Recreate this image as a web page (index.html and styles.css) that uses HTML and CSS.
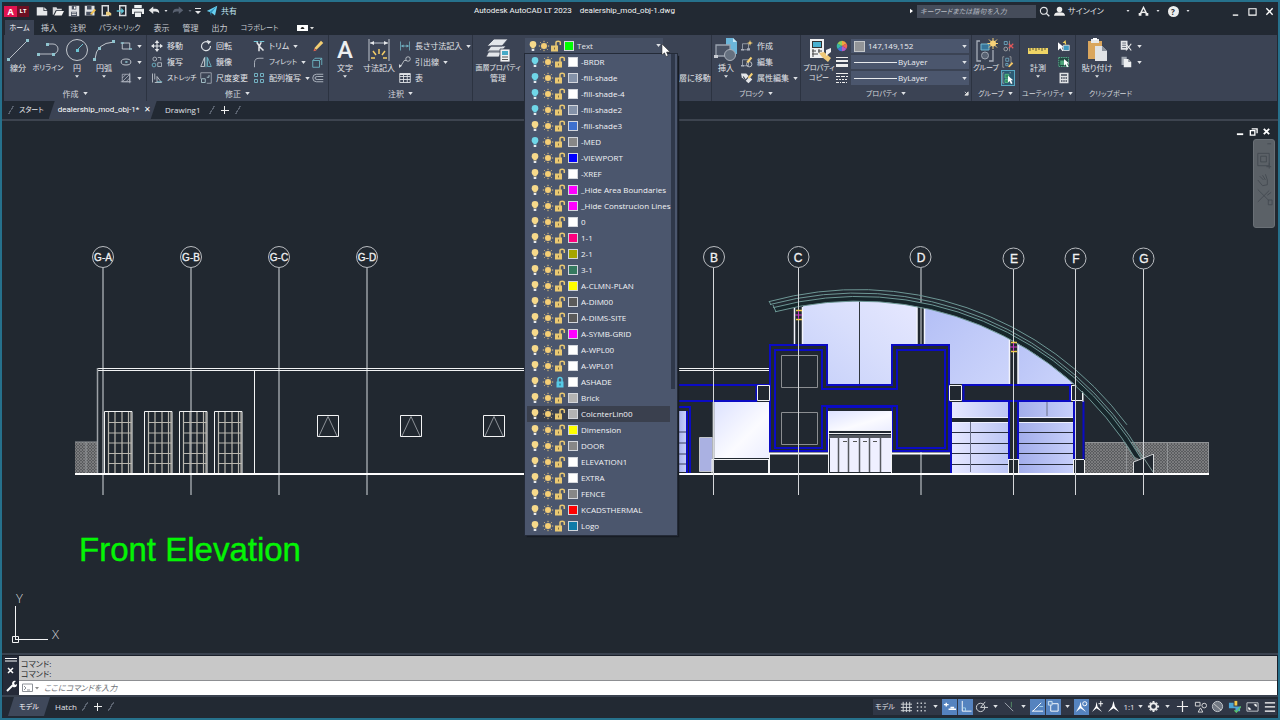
FILE: index.html
```html
<!DOCTYPE html>
<html lang="ja">
<head>
<meta charset="utf-8">
<title>Autodesk AutoCAD LT 2023 - dealership_mod_obj-1.dwg</title>
<link rel="stylesheet" href="styles.css">
</head>
<body>
<svg class="defs" aria-hidden="true">
  <symbol id="bulb" viewBox="0 0 10 12"><circle cx="5" cy="4.3" r="3.3" fill="currentColor"/><path d="M3.4 6h3.2v2.4H3.4z" fill="currentColor"/><path d="M3.7 9h2.6v2H3.7z" fill="#e8eaee"/></symbol>
  <symbol id="sun" viewBox="0 0 12 12"><circle cx="6" cy="6" r="3" fill="#f5ce76"/><path d="M6 .8v1.4M6 9.8v1.4M.8 6h1.4M9.800 6h1.4M2.300 2.300l1 1M8.700 8.700l1 1M9.700 2.300l-1 1M2.300 9.700l1-1" stroke="#e9c77e" stroke-width="1"/></symbol>
  <symbol id="unlock" viewBox="0 0 12 12"><path d="M1 5.500h7v6H1z" fill="#e9c872"/><path d="M6 6V2.500Q6 1.200 8.200 1.200T10.300 2.500V5" fill="none" stroke="#e9c872" stroke-width="1.500"/><path d="M4 7.500h1v2H4z" fill="#7c6c45"/></symbol>
  <symbol id="lock" viewBox="0 0 12 12"><path d="M2.500 5.500h7v6h-7z" fill="#57cbe8"/><path d="M4 6V3.500Q4 1.500 6 1.500T8 3.500V6" fill="none" stroke="#57cbe8" stroke-width="1.500"/><path d="M5.500 7.500h1v2h-1z" fill="#24566b"/></symbol>
  <symbol id="dn" viewBox="0 0 6 4"><path d="M0 0h6L3 4z" fill="currentColor"/></symbol>
</svg>
<div class="app">
  <header class="titlebar">
    <div class="logo"><b>A</b><span>LT</span></div>
    <div class="quick">
      <button aria-label="新規"><svg viewBox="0 0 16 16"><path d="M1 3h9v5h5v6H1z" fill="#e6e8ea"/><path d="M11 3l4 4h-4z" fill="#e6e8ea"/></svg></button>
      <button aria-label="開く"><svg viewBox="0 0 16 16"><path d="M1 3h5l1 2h6v2H5l-3 6H1z" fill="#d5d7da"/><path d="M6 8h10l-3 6H3z" fill="#f1f1f1"/></svg></button>
      <button aria-label="保存"><svg viewBox="0 0 16 16"><path d="M1 1h14v14H1z" fill="#dfe1e4"/><path d="M5 1h6v5H5zM4 9h8v6H4z" fill="#485060"/><path d="M8 2h2v3H8zM5 10h6v1H5zM5 12h6v1H5z" fill="#fff"/></svg></button>
      <button aria-label="名前を付けて保存"><svg viewBox="0 0 16 16"><path d="M1 1h13v13H1z" fill="#dfe1e4"/><path d="M4 1h6v5H4zM3 9h8v5H3z" fill="#485060"/><path d="M8 12l6-7 2 2-6 6z" fill="#f3c451"/></svg></button>
      <button aria-label="Webから開く"><svg viewBox="0 0 16 16"><path d="M3 1h8v13H3z" fill="none" stroke="#d8dadd" stroke-width="2"/><path d="M8 9h4l3 2v3H8z" fill="#e9cc80"/></svg></button>
      <button aria-label="Webへ保存"><svg viewBox="0 0 16 16"><path d="M5 1h8v13H5z" fill="none" stroke="#d8dadd" stroke-width="2"/><path d="M1 7h6V4l4 4-4 4V9H1z" fill="#62c5d6"/></svg></button>
      <button aria-label="印刷"><svg viewBox="0 0 16 16"><path d="M3 0h10v4H3zM0 5h16v7h-3V9H3v3H0zM4 10h8v6H4z" fill="#edf0f2"/></svg></button>
      <button aria-label="元に戻す"><svg viewBox="0 0 16 16"><path d="M1 7l6-5v3h3q5 0 5 6-2-2.500-5-2.500H7V12z" fill="#e4e6e8"/></svg></button>
      <button class="narrow" aria-label="履歴"><svg class="dn"><use href="#dn"/></svg></button>
      <button class="dim" aria-label="やり直し"><svg viewBox="0 0 16 16"><path d="M15 7L9 2v3H6q-5 0-5 6 2-2.500 5-2.500h3V12z" fill="#596170"/></svg></button>
      <button class="narrow dim" aria-label="やり直し履歴"><svg class="dn"><use href="#dn"/></svg></button>
      <button class="narrow" aria-label="カスタマイズ"><svg viewBox="0 0 8 8" class="cust"><path d="M1 1h6v1H1zM1 4h6L4 7z" fill="#e5e6e8"/></svg></button>
      <button class="share"><svg viewBox="0 0 16 16"><path d="M1 8l14-7-3 13-5-4z" fill="#69cff0"/><path d="M5 9l9-7-7 9v4z" fill="#2f91bb"/></svg>共有</button>
    </div>
    <h1><span>Autodesk AutoCAD LT 2023</span><span>dealership_mod_obj-1.dwg</span></h1>
    <div class="account">
      <svg viewBox="0 0 4 6" class="play"><path d="M0 0l4 3-4 3z" fill="#fff"/></svg>
      <input type="text" aria-label="検索" placeholder="キーワードまたは語句を入力">
      <button aria-label="検索"><svg viewBox="0 0 16 16"><circle cx="7" cy="7" r="5" fill="none" stroke="#e4e6e9" stroke-width="1.600"/><path d="M10 10l5 5" stroke="#e4e6e9" stroke-width="2"/></svg></button>
      <button class="sign"><svg viewBox="0 0 16 16"><circle cx="8" cy="5" r="4" fill="#eee"/><path d="M0 14q0-5 8-5t8 5z" fill="#eee"/></svg>サインイン</button>
      <button class="narrow" aria-label="アカウント"><svg class="dn"><use href="#dn"/></svg></button>
      <button aria-label="アプリ"><svg viewBox="0 0 16 16"><path d="M8 2L4 10l4-1 4 1z" fill="none" stroke="#eee" stroke-width="2"/><path d="M1 10h4v4H1zM11 10h4v4h-4z" fill="#eee"/></svg></button>
      <button class="narrow" aria-label="アプリメニュー"><svg class="dn"><use href="#dn"/></svg></button>
      <button class="help" aria-label="ヘルプ"><b>?</b></button>
      <button class="narrow" aria-label="ヘルプメニュー"><svg class="dn"><use href="#dn"/></svg></button>
    </div>
    <div class="winctl">
      <button aria-label="最小化"><svg viewBox="0 0 10 10"><path d="M2 9h6" stroke="#fff" stroke-width="1.500"/></svg></button>
      <button aria-label="最大化"><svg viewBox="0 0 10 10"><path d="M1 2h8v7H1z" fill="none" stroke="#fff" stroke-width="1.200"/></svg></button>
      <button aria-label="閉じる"><svg viewBox="0 0 10 10"><path d="M1.500 1.500l7 7M8.500 1.500l-7 7" stroke="#fff" stroke-width="1.500"/></svg></button>
    </div>
  </header>

  <nav class="menu">
    <button class="on kana">ホーム</button><button>挿入</button><button>注釈</button><button class="kana">パラメトリック</button><button>表示</button><button>管理</button><button>出力</button><button class="kana">コラボレート</button>
    <button class="fold" aria-label="リボンを最小化"><svg viewBox="0 0 18 6"><path d="M0 0h11v6H0z" fill="#fff"/><path d="M4 3.500h3L5.500 2z" fill="#222" stroke="#222"/><path d="M13 2h4l-2 2.500z" fill="#ddd"/></svg></button>
  </nav>

  <section class="ribbon">
    <div class="panel p-draw">
      <div class="body">
        <button class="big w28"><svg viewBox="0 0 24 24"><path d="M3 21L21 3" stroke="#b9bec6"/><path d="M1 20h3v3H1zM20 1h3v3h-3z" fill="#8fc4cf"/></svg>線分</button>
        <button class="big w32 kana"><svg viewBox="0 0 24 24"><path d="M3 16h14a5 5 0 0 0 0-10h-4" fill="none" stroke="#b9bec6"/><path d="M1 15h3v3H1zM16 15h3v3h-3zM10 5h3v3h-3z" fill="#8fc4cf"/></svg>ポリライン</button>
        <button class="big w26"><svg viewBox="0 0 24 24"><circle cx="12" cy="12" r="10.500" fill="none" stroke="#c3c8ce"/><path d="M12 12l6-6" stroke="#6cc3d2"/><path d="M11 11h3v3h-3z" fill="#6cc3d2"/></svg>円<svg class="dn"><use href="#dn"/></svg></button>
        <button class="big w28"><svg viewBox="0 0 24 24"><path d="M3 21Q4 5 22 4" fill="none" stroke="#c3c8ce"/><path d="M1 20h3v3H1zM6 9h3v3H6zM20 2h3v3h-3z" fill="#8fc4cf"/></svg>円弧<svg class="dn"><use href="#dn"/></svg></button>
        <div class="rows">
          <button class="sm"><svg viewBox="0 0 16 16"><path d="M3 4h10v8H3z" fill="none" stroke="#c0c5cd" stroke-width="1.300"/><path d="M1 3h4v2H1zM12 11h4v2h-4z" fill="#8fc4cf"/></svg><svg class="dn"><use href="#dn"/></svg></button>
          <button class="sm"><svg viewBox="0 0 16 16"><ellipse cx="8" cy="8" rx="6.500" ry="4" fill="none" stroke="#c0c5cd" stroke-width="1.300"/><path d="M7 7h3v2H7z" fill="#8fc4cf"/></svg><svg class="dn"><use href="#dn"/></svg></button>
          <button class="sm"><svg viewBox="0 0 16 16"><path d="M3 3h10v10H3zM3 8l5-5M3 13L13 3M8 13l5-5" fill="none" stroke="#b4bac4"/><path d="M1 13h14M13 1v14" stroke="#b4bac4"/></svg><svg class="dn"><use href="#dn"/></svg></button>
        </div>
      </div>
      <button class="title">作成<svg class="dn"><use href="#dn"/></svg></button>
    </div>

    <div class="panel p-mod">
      <div class="body grid4">
        <button class="sm"><svg viewBox="0 0 16 16"><path d="M8 2v12M2 8h12" stroke="#e4e7ea" stroke-width="1.500"/><path d="M8 0l3 4H5zM8 16l3-4H5zM0 8l4-3v6zM16 8l-4-3v6z" fill="#e4e7ea"/></svg>移動</button>
        <button class="sm"><svg viewBox="0 0 16 16"><path d="M11 3A6 6 0 1 0 14 8" fill="none" stroke="#dfe3e7" stroke-width="1.500"/><path d="M9 0l6 2-4 4z" fill="#dfe3e7"/></svg>回転</button>
        <button class="sm"><svg viewBox="0 0 16 16"><path d="M1 2h6M9 2h6" stroke="#74c7d7" stroke-width="1.500"/><path d="M5 3l4 6 5 5M11 3L8 9v6" stroke="#e6e8ea" stroke-width="2" fill="none"/></svg>トリム<svg class="dn"><use href="#dn"/></svg></button>
        <button class="sm"><svg viewBox="0 0 16 16"><path d="M3 11l9-10 3 3-9 9z" fill="#f3ce73"/><path d="M3 11l3 3-4 1z" fill="#e6664f"/></svg></button>
        <button class="sm"><svg viewBox="0 0 16 16"><circle cx="5" cy="4" r="2.500" fill="none" stroke="#c6cbd2"/><path d="M9 2h4v4" fill="none" stroke="#c6cbd2"/><circle cx="4" cy="12" r="2.500" fill="none" stroke="#74c7d7"/><path d="M9 9h5v5H9z" fill="none" stroke="#c6cbd2"/></svg>複写</button>
        <button class="sm"><svg viewBox="0 0 16 16"><path d="M6 2v12H1z" fill="none" stroke="#dfe3e7"/><path d="M10 2v12h5z" fill="none" stroke="#74c7d7"/><path d="M8 1v14" stroke="#74c7d7"/></svg>鏡像</button>
        <button class="sm kana"><svg viewBox="0 0 16 16"><path d="M2 15V9q0-6 6-6h6" fill="none" stroke="#a9afb9" stroke-width="1.300"/></svg>フィレット<svg class="dn"><use href="#dn"/></svg></button>
        <button class="sm"><svg viewBox="0 0 16 16"><path d="M1 6h9v9H1zM4 3h9v9M10 6l3-3M1 6l3-3" fill="none" stroke="#6cb3c2" stroke-width="1.200"/></svg></button>
        <button class="sm kana"><svg viewBox="0 0 16 16"><path d="M2 2v12M5 14h9L8 6v8M5 2v8" fill="none" stroke="#bcc2ca" stroke-width="1.200"/><path d="M8 13h7" stroke="#74c7d7"/></svg>ストレッチ</button>
        <button class="sm"><svg viewBox="0 0 16 16"><path d="M1 9V1h14v14H9" fill="none" stroke="#9fa6b1" stroke-width="1.200"/><path d="M2 9h5v5H2zM9 7h3V4" fill="none" stroke="#bfe0e6"/></svg>尺度変更</button>
        <button class="sm"><svg viewBox="0 0 16 16"><path d="M2 2h4v4H2zM10 2h4v4h-4zM2 10h4v4H2zM10 10h4v4h-4z" fill="none" stroke="#74b3c4" stroke-width="1.300"/></svg>配列複写<svg class="dn"><use href="#dn"/></svg></button>
        <button class="sm"><svg viewBox="0 0 16 16"><path d="M15 3H6Q1 3 1 8t5 5h9M15 6H7Q4 6 4 8t3 2h8" fill="none" stroke="#b6bdc7" stroke-width="1.200"/></svg></button>
      </div>
      <button class="title">修正<svg class="dn"><use href="#dn"/></svg></button>
    </div>

    <div class="panel p-ann">
      <div class="body">
        <button class="big w32"><span class="bigA">A</span>文字<svg class="dn"><use href="#dn"/></svg></button>
        <button class="big w36"><svg viewBox="0 0 24 24"><path d="M2 1v22M22 1v22M3 5h18" stroke="#c0c6ce" fill="none"/><path d="M3 5l4-2v4zM21 5l-4-2v4z" fill="#e5e7ea"/><path d="M12 11v5M6 13l3 4M18 13l-3 4M4 20h4M20 20h-4" stroke="#f3cd67" stroke-width="1.500"/></svg>寸法記入</button>
        <div class="rows">
          <button class="sm"><svg viewBox="0 0 16 16"><path d="M2 2v12M14 2v12M3 8h10" stroke="#74b7c8"/><path d="M3 8l3-2v4zM13 8l-3-2v4z" fill="#74b7c8"/></svg>長さ寸法記入<svg class="dn"><use href="#dn"/></svg></button>
          <button class="sm"><svg viewBox="0 0 16 16"><circle cx="12" cy="4" r="3" fill="none" stroke="#d5d9de"/><path d="M10 6H7l-5 8" fill="none" stroke="#d5d9de"/><path d="M0 11l4 2-4 3z" fill="#d5d9de"/></svg>引出線<svg class="dn"><use href="#dn"/></svg></button>
          <button class="sm"><svg viewBox="0 0 16 16"><path d="M1 2h14v12H1zM1 6h14M1 10h14M6 4v10M11 4v10" fill="none" stroke="#dfe2e6" stroke-width="1.200"/><path d="M1 2h14v2H1z" fill="#dfe2e6"/></svg>表</button>
        </div>
      </div>
      <button class="title">注釈<svg class="dn"><use href="#dn"/></svg></button>
    </div>

    <div class="panel p-layer">
      <div class="body">
        <button class="big w50"><svg viewBox="0 0 24 24"><path d="M8 1h14l-6 7H1zM5 8h15l-5 6H1zM3 13h13l-3 6H0z" fill="#e3e6ea" stroke="#3b4354" stroke-width=".8"/><path d="M14 11h10v13H14z" fill="#f0f1f2" stroke="#3b4354" stroke-width=".8"/><path d="M16 13h6v4h-6z" fill="#46aac7"/><path d="M16 19h6M16 21.500h6" stroke="#555"/></svg><span class="kana">画層プロパティ</span>管理</button>
        <div class="layers">
          <button class="combo" aria-expanded="true" aria-label="画層"><svg class="bu on"><use href="#bulb"/></svg><svg class="ic"><use href="#sun"/></svg><svg class="ic"><use href="#unlock"/></svg><i class="green"></i><span>Text</span><svg class="dn"><use href="#dn"/></svg></button>
          <ul class="list" role="listbox" aria-label="画層一覧">
            <li role="option"><svg class="bu"><use href="#bulb"/></svg><svg class="ic"><use href="#sun"/></svg><svg class="ic"><use href="#unlock"/></svg><i class="white"></i>-BRDR</li>
            <li role="option"><svg class="bu"><use href="#bulb"/></svg><svg class="ic"><use href="#sun"/></svg><svg class="ic"><use href="#unlock"/></svg><i class="slate"></i>-fill-shade</li>
            <li role="option"><svg class="bu"><use href="#bulb"/></svg><svg class="ic"><use href="#sun"/></svg><svg class="ic"><use href="#unlock"/></svg><i class="white"></i>-fill-shade-4</li>
            <li role="option"><svg class="bu"><use href="#bulb"/></svg><svg class="ic"><use href="#sun"/></svg><svg class="ic"><use href="#unlock"/></svg><i class="slate"></i>-fill-shade2</li>
            <li role="option"><svg class="bu on"><use href="#bulb"/></svg><svg class="ic"><use href="#sun"/></svg><svg class="ic"><use href="#unlock"/></svg><i class="azure"></i>-fill-shade3</li>
            <li role="option"><svg class="bu"><use href="#bulb"/></svg><svg class="ic"><use href="#sun"/></svg><svg class="ic"><use href="#unlock"/></svg><i class="gray"></i>-MED</li>
            <li role="option"><svg class="bu on"><use href="#bulb"/></svg><svg class="ic"><use href="#sun"/></svg><svg class="ic"><use href="#unlock"/></svg><i class="blue"></i>-VIEWPORT</li>
            <li role="option"><svg class="bu on"><use href="#bulb"/></svg><svg class="ic"><use href="#sun"/></svg><svg class="ic"><use href="#unlock"/></svg><i class="white"></i>-XREF</li>
            <li role="option"><svg class="bu on"><use href="#bulb"/></svg><svg class="ic"><use href="#sun"/></svg><svg class="ic"><use href="#unlock"/></svg><i class="magenta"></i>_Hide Area Boundaries</li>
            <li role="option"><svg class="bu on"><use href="#bulb"/></svg><svg class="ic"><use href="#sun"/></svg><svg class="ic"><use href="#unlock"/></svg><i class="magenta"></i>_Hide Construcion Lines</li>
            <li role="option"><svg class="bu on"><use href="#bulb"/></svg><svg class="ic"><use href="#sun"/></svg><svg class="ic"><use href="#unlock"/></svg><i class="white"></i>0</li>
            <li role="option"><svg class="bu on"><use href="#bulb"/></svg><svg class="ic"><use href="#sun"/></svg><svg class="ic"><use href="#unlock"/></svg><i class="rose"></i>1-1</li>
            <li role="option"><svg class="bu on"><use href="#bulb"/></svg><svg class="ic"><use href="#sun"/></svg><svg class="ic"><use href="#unlock"/></svg><i class="olive"></i>2-1</li>
            <li role="option"><svg class="bu on"><use href="#bulb"/></svg><svg class="ic"><use href="#sun"/></svg><svg class="ic"><use href="#unlock"/></svg><i class="teal"></i>3-1</li>
            <li role="option"><svg class="bu on"><use href="#bulb"/></svg><svg class="ic"><use href="#sun"/></svg><svg class="ic"><use href="#unlock"/></svg><i class="yellow"></i>A-CLMN-PLAN</li>
            <li role="option"><svg class="bu on"><use href="#bulb"/></svg><svg class="ic"><use href="#sun"/></svg><svg class="ic"><use href="#unlock"/></svg><i class="coal"></i>A-DIM00</li>
            <li role="option"><svg class="bu on"><use href="#bulb"/></svg><svg class="ic"><use href="#sun"/></svg><svg class="ic"><use href="#unlock"/></svg><i class="coal"></i>A-DIMS-SITE</li>
            <li role="option"><svg class="bu on"><use href="#bulb"/></svg><svg class="ic"><use href="#sun"/></svg><svg class="ic"><use href="#unlock"/></svg><i class="magenta"></i>A-SYMB-GRID</li>
            <li role="option"><svg class="bu on"><use href="#bulb"/></svg><svg class="ic"><use href="#sun"/></svg><svg class="ic"><use href="#unlock"/></svg><i class="white"></i>A-WPL00</li>
            <li role="option"><svg class="bu on"><use href="#bulb"/></svg><svg class="ic"><use href="#sun"/></svg><svg class="ic"><use href="#unlock"/></svg><i class="white"></i>A-WPL01</li>
            <li role="option"><svg class="bu on"><use href="#bulb"/></svg><svg class="ic"><use href="#sun"/></svg><svg class="ic"><use href="#lock"/></svg><i class="white"></i>ASHADE</li>
            <li role="option"><svg class="bu on"><use href="#bulb"/></svg><svg class="ic"><use href="#sun"/></svg><svg class="ic"><use href="#unlock"/></svg><i class="silver"></i>Brick</li>
            <li role="option" aria-selected="true"><svg class="bu on"><use href="#bulb"/></svg><svg class="ic"><use href="#sun"/></svg><svg class="ic"><use href="#unlock"/></svg><i class="silver"></i>ColcnterLin00</li>
            <li role="option"><svg class="bu on"><use href="#bulb"/></svg><svg class="ic"><use href="#sun"/></svg><svg class="ic"><use href="#unlock"/></svg><i class="yellow"></i>Dimension</li>
            <li role="option"><svg class="bu on"><use href="#bulb"/></svg><svg class="ic"><use href="#sun"/></svg><svg class="ic"><use href="#unlock"/></svg><i class="gray"></i>DOOR</li>
            <li role="option"><svg class="bu on"><use href="#bulb"/></svg><svg class="ic"><use href="#sun"/></svg><svg class="ic"><use href="#unlock"/></svg><i class="white"></i>ELEVATION1</li>
            <li role="option"><svg class="bu on"><use href="#bulb"/></svg><svg class="ic"><use href="#sun"/></svg><svg class="ic"><use href="#unlock"/></svg><i class="white"></i>EXTRA</li>
            <li role="option"><svg class="bu on"><use href="#bulb"/></svg><svg class="ic"><use href="#sun"/></svg><svg class="ic"><use href="#unlock"/></svg><i class="gray"></i>FENCE</li>
            <li role="option"><svg class="bu on"><use href="#bulb"/></svg><svg class="ic"><use href="#sun"/></svg><svg class="ic"><use href="#unlock"/></svg><i class="red"></i>KCADSTHERMAL</li>
            <li role="option"><svg class="bu on"><use href="#bulb"/></svg><svg class="ic"><use href="#sun"/></svg><svg class="ic"><use href="#unlock"/></svg><i class="cerulean"></i>Logo</li>
          </ul>
          <svg class="cursor" viewBox="0 0 10 15"><path d="M1 1v11l2.500-2.200L5 13.500l2-.8L5.500 9H9z" fill="#fff" stroke="#222" stroke-width=".5"/></svg>
        </div>
        <button class="move">層に移動</button>
      </div>
    </div>

    <div class="panel p-block">
      <div class="body">
        <button class="big w26"><svg viewBox="0 0 24 24"><path d="M12 0h7l4 4v12H12z" fill="#6bb6da"/><path d="M19 0v4h4z" fill="#c6e8f6"/><path d="M2 7h14v11H2z" fill="#4b5465" stroke="#9aa2ae" stroke-width="1.300"/><circle cx="16" cy="17" r="5.500" fill="#65707f" stroke="#aab1bb"/><path d="M0 17h4v3H0z" fill="#c8ccd2"/></svg>挿入<svg class="dn"><use href="#dn"/></svg></button>
        <div class="rows">
          <button class="sm"><svg viewBox="0 0 16 16"><path d="M2 5h8v8H2z" fill="none" stroke="#aab0bb"/><path d="M0 12h4v2H0zM8 11h4v3H8z" fill="#aab0bb"/><path d="M12 0l1 3 3 1-3 1-1 3-1-3-3-1 3-1z" fill="#f4cf74"/></svg>作成</button>
          <button class="sm"><svg viewBox="0 0 16 16"><path d="M2 5h8v8H2z" fill="none" stroke="#aab0bb"/><path d="M0 12h4v2H0z" fill="#aab0bb"/><circle cx="11" cy="11" r="3.500" fill="none" stroke="#e1e3e6"/><path d="M7 8l6-7 2 2-5 6z" fill="#f4cf74"/></svg>編集</button>
          <button class="sm"><svg viewBox="0 0 16 16"><path d="M0 2h7l8 8-5 5-9-8z" fill="#e3e5e8"/><path d="M3 6l3 5 8-9" fill="none" stroke="#3b4354" stroke-width="1.500"/><path d="M9 7l5-6 2 2-5 6z" fill="#f4cf74"/></svg>属性編集<svg class="dn"><use href="#dn"/></svg></button>
        </div>
      </div>
      <button class="title kana">ブロック<svg class="dn"><use href="#dn"/></svg></button>
    </div>

    <div class="panel p-prop">
      <div class="body">
        <button class="big w34 kana"><svg viewBox="0 0 24 24"><path d="M3 1h14v19H3z" fill="#f0f1f2"/><path d="M5 3h10v7H5z" fill="#333"/><path d="M6 4h8v5H6z" fill="#49b0d0"/><path d="M5 13h4M11 13h4M5 16h6M6 11v8M12 11v4" stroke="#444"/><path d="M12 15l5-1 7 6-3 4-6-5z" fill="#efc978"/><path d="M19 12l5-2v4l-5 4z" fill="#f2f2f2"/></svg>プロパティ<br>コピー</button>
        <div class="props">
          <span class="prop"><svg viewBox="0 0 16 16"><path d="M8 8V1a7 7 0 0 1 6 3.500z" fill="#f2a43d"/><path d="M8 8l6-3.500a7 7 0 0 1 0 7z" fill="#f06456"/><path d="M8 8l6 3.500A7 7 0 0 1 8 15z" fill="#b85bc4"/><path d="M8 8v7a7 7 0 0 1-6-3.500z" fill="#4278d8"/><path d="M8 8l-6 3.500a7 7 0 0 1 0-7z" fill="#39b7a6"/><path d="M8 8L2 4.500A7 7 0 0 1 8 1z" fill="#92ce58"/></svg><span class="field"><i class="rgb"></i><select aria-label="色"><option>147,149,152</option></select><svg class="dn"><use href="#dn"/></svg></span></span>
          <span class="prop"><svg viewBox="0 0 12 12"><path d="M0 1.500h12" stroke="#eee"/><path d="M0 5h12" stroke="#eee" stroke-width="2"/><path d="M0 9.500h12" stroke="#eee" stroke-width="3"/></svg><span class="field"><i class="rule"></i><select aria-label="線の太さ"><option>ByLayer</option></select><svg class="dn"><use href="#dn"/></svg></span></span>
          <span class="prop"><svg viewBox="0 0 12 12"><path d="M0 1.500h12" stroke="#eee"/><path d="M0 4.500h12" stroke="#eee" stroke-dasharray="4 1"/><path d="M0 7.500h12" stroke="#eee" stroke-dasharray="2 1"/><path d="M0 10.500h12" stroke="#eee" stroke-dasharray="3 1 1 1"/></svg><span class="field"><i class="rule"></i><select aria-label="線種"><option>ByLayer</option></select><svg class="dn"><use href="#dn"/></svg></span></span>
        </div>
      </div>
      <button class="title kana">プロパティ<svg class="dn"><use href="#dn"/></svg><svg class="launch" viewBox="0 0 6 6"><path d="M1 1l3 3M5 1v4H1z" fill="#ddd" stroke="#ddd"/></svg></button>
    </div>

    <div class="panel p-group">
      <div class="body">
        <button class="big w28 kana"><svg viewBox="0 0 24 24"><path d="M6 3H3v20h4M15 23h4V12" fill="none" stroke="#a7adb8" stroke-width="1.300"/><path d="M7 6h8v6H7z" fill="#37759a" stroke="#74b7d0"/><circle cx="11" cy="17.500" r="3.500" fill="#596373" stroke="#a0a7b2"/><circle cx="19" cy="5.500" r="3" fill="#f6d178"/><path d="M19 0v11M13.500 5.500h11M15 1.500l8 8M23 1.500l-8 8" stroke="#f6d178"/></svg>グループ</button>
        <div class="rows">
          <button class="sm"><svg viewBox="0 0 16 16"><path d="M3 2h4v4H3z" fill="none" stroke="#74b7d0"/><circle cx="5" cy="12" r="2.500" fill="none" stroke="#bbb"/><path d="M10 1v14" stroke="#999"/><path d="M9 5l6 6M15 5l-6 6" stroke="#e4585a" stroke-width="1.600"/></svg></button>
          <button class="sm"><svg viewBox="0 0 16 16"><path d="M3 1H1v14h2M10 1h2v8" fill="none" stroke="#aaa"/><path d="M5 3h4v4H5zM5 10h3v3H5z" fill="none" stroke="#74b7d0"/><path d="M8 14l5-6 2 2-5 5z" fill="#f3c767"/></svg></button>
          <button class="sm active"><svg viewBox="0 0 16 16"><path d="M3 1H1v14h2M10 1h2" fill="none" stroke="#aaa"/><path d="M4 3h5v5H4zM4 10h4v4H4z" fill="#308b62" stroke="#5cc38c"/><path d="M8 5v9l2-2 2 4 2-1-2-4h3z" fill="#fff"/></svg></button>
        </div>
      </div>
      <button class="title kana">グループ<svg class="dn"><use href="#dn"/></svg></button>
    </div>

    <div class="panel p-util">
      <div class="body">
        <button class="big w36"><svg viewBox="0 0 24 24"><path d="M2 10h20v6H2z" fill="#f0d565"/><path d="M4 10v3M7 10v2M10 10v3M13 10v2M16 10v3M19 10v2" stroke="#5d5939"/></svg>計測<svg class="dn"><use href="#dn"/></svg></button>
        <div class="rows">
          <button class="sm"><svg viewBox="0 0 16 16"><path d="M0 3v11l3-3 3 4 1-1-2-4h3z" fill="#fff"/><path d="M7 7h8v7H7z" fill="#3f9ac1" stroke="#eee"/><path d="M10 0L6 4h3v2h2z" fill="#f3d45e"/></svg></button>
          <button class="sm"><svg viewBox="0 0 16 16"><path d="M1 2h13v12H1z" fill="#214b42" stroke="#5fc596" stroke-dasharray="2 1"/><path d="M3 6h5v6H3z" fill="#4da47a"/><path d="M8 4v9l2-2 2 4 2-1-2-4h3z" fill="#fff"/></svg></button>
          <button class="sm"><svg viewBox="0 0 16 16"><path d="M2 1h12v14H2z" fill="#e1e3e5"/><path d="M4 3h8v2H4zM4 7h2v2H4zM7 7h2v2H7zM10 7h2v2h-2zM4 11h2v2H4zM7 11h2v2H7zM10 11h2v2h-2z" fill="#404857"/></svg></button>
        </div>
      </div>
      <button class="title kana">ユーティリティ<svg class="dn"><use href="#dn"/></svg></button>
    </div>

    <div class="panel p-clip">
      <div class="body">
        <button class="big w42"><svg viewBox="0 0 24 24"><path d="M3 3h14v18H3z" fill="#daa65e"/><path d="M6 1h8v4H6z" fill="#e7e8ea"/><path d="M8 0h4v2H8z" fill="#fff"/><path d="M10 8h7l5 5v10H10z" fill="#e1e3e6"/><path d="M17 8v5h5z" fill="#8c929c"/></svg>貼り付け<svg class="dn"><use href="#dn"/></svg></button>
        <div class="rows">
          <button class="sm"><svg viewBox="0 0 16 16"><path d="M1 1h9v12H1z" fill="#e4e6e9"/><path d="M3 4h5M3 7h5M3 10h5" stroke="#444c5b"/><path d="M8 5l7 9M15 5l-7 9" stroke="#eee" stroke-width="1.500"/></svg><svg class="dn"><use href="#dn"/></svg></button>
          <button class="sm"><svg viewBox="0 0 16 16"><path d="M2 1h7v11H2z" fill="#9fa6b0"/><path d="M5 4h6l4 4v7H5z" fill="#eceef0"/><path d="M11 4v4h4z" fill="#878d96"/></svg><svg class="dn"><use href="#dn"/></svg></button>
        </div>
      </div>
      <div class="title kana">クリップボード</div>
    </div>
  </section>

  <nav class="files">
    <span class="slash"></span><button class="kana">スタート</button>
    <div class="tab"><span>dealership_mod_obj-1*</span><button aria-label="タブを閉じる">✕</button></div>
    <button class="second">Drawing1</button><span class="slash"></span><button class="plus" aria-label="新しいタブ"></button><span class="slash"></span>
  </nav>

  <main class="canvas">
    <svg class="dwg" viewBox="2 121 1276 532" role="img" aria-label="Front Elevation">
      <defs>
        <linearGradient id="glassA" x1="0" y1="1" x2="1" y2="0"><stop offset="0" stop-color="#c6d0fa"/><stop offset=".5" stop-color="#d8defc"/><stop offset="1" stop-color="#e8e9ff"/></linearGradient>
        <linearGradient id="glassB" x1="0" y1="0" x2="1" y2="1"><stop offset="0" stop-color="#b1bdf5"/><stop offset="1" stop-color="#cdd5fb"/></linearGradient>
        <linearGradient id="pale" x1="0" y1="0" x2="1" y2="1"><stop offset="0" stop-color="#dde2ff"/><stop offset=".6" stop-color="#fbfbff"/><stop offset="1" stop-color="#eceeff"/></linearGradient>
        <linearGradient id="garL" x1="0" y1="0" x2="1" y2="0"><stop offset="0" stop-color="#e6e8ff"/><stop offset="1" stop-color="#bcc6f5"/></linearGradient>
        <linearGradient id="garR" x1="0" y1="0" x2="1" y2="0"><stop offset="0" stop-color="#a3aeeb"/><stop offset="1" stop-color="#c6cffa"/></linearGradient>
        <pattern id="mesh" width="3" height="3" patternUnits="userSpaceOnUse"><rect width="3" height="3" fill="#595b5e"/><path d="M0 0l3 3M3 0L0 3" stroke="#86888a" stroke-width=".7"/></pattern>
        <clipPath id="roof"><circle cx="858" cy="624" r="323"/></clipPath>
        <g id="door"><path d="M.5 62V.5H28V62" class="w1"/><path d="M4.500 1v61M11 1v61M18 1v61M24.500 1v61M27 1v61M4 11.500h24M4 22h24M4 32h24M4 42.500h24M4 52.500h24" stroke="#b8b6ae" stroke-width="1.200" fill="none"/></g>
        <g id="win"><path d="M.5.500h21v21H.5z" class="w1"/><path d="M2 21L11 1.500 20 21" fill="none" stroke="#8d9298"/></g>
      </defs>

      <g class="gridthick"><path d="M103 268v227M191 268v227M279 268v227M367 268v227M921 268v227"/></g>
      <path d="M75 442h22v32H75z" fill="url(#mesh)"/>
      <path d="M97 442h-22M86 442v32" stroke="#96999c"/>
      <path d="M97 368.500h673M97 370.500h673M254.500 370v103" class="w1"/>
      <path d="M97.500 368v105" stroke="#9da1a6" stroke-width="1.500"/>
      <use href="#door" x="104" y="411"/><use href="#door" x="144" y="411"/><use href="#door" x="179" y="411"/><use href="#door" x="214" y="411"/>
      <use href="#win" x="317" y="415"/><use href="#win" x="400" y="415"/><use href="#win" x="483" y="415"/>

      <g clip-path="url(#roof)">
        <path d="M803 290h114v94H803z" fill="url(#glassA)"/>
        <path d="M925 290h84v94h-84z" fill="url(#glassB)"/>
        <path d="M1018 290h62v94h-62z" fill="url(#glassB)"/>
        <path d="M859.500 290v94" stroke="#30363d"/>
        <path d="M794.500 307v38M802.500 307v38M917 300v45M924.500 300v45M1009.500 320v64M1018 320v64" stroke="#f2f3fb" stroke-width="1.500"/>
      </g>
      <path d="M677 384h93v18h-93z" class="bg"/>
      <path d="M677 385h93M677 401h80M756.500 385v16" class="b2"/>
      <path d="M677 411h9v61h-9z" fill="url(#garR)"/><path d="M677 432h9M677 443h9M677 454h9M677 464h9" stroke="#3a4061"/>
      <path d="M677 407h14M690 407v67M687 411v62" class="b2"/>
      <path d="M699.500 437.500h13v34h-13z" fill="#aab1e2" stroke="#c3c6cb"/>
      <path d="M714 402h55v56h-55z" fill="url(#pale)"/><path d="M713.500 402v57" stroke="#9ca0a6" stroke-width="2"/>
      <path d="M712 459.500h56M768.500 459v14M712 459v14" class="w1"/>

      <path d="M770 345h57v40h65v-40h57v106h-57v-44h-65v44h-57z" class="b2 solid"/>
      <path d="M775 350h47v39h75v-39h48v98h-48v-42h-75v42h-47z" class="b2 solid"/>
      <path d="M757.500 385.500h12v15h-12z" class="w1 solid"/>
      <path d="M781.500 355.500h36v32h-36zM781.500 412.500h36v32h-36z" fill="none" stroke="#8b8e91"/>
      <path d="M769 453.500h59M892 453.500h58" class="w2"/><path d="M769.500 454v19M828.500 411v62M891.500 411v62" class="w1"/>
      <path d="M829 411h62v19h-62z" fill="url(#pale)"/>
      <path d="M828 430.500h63M828 433.500h63" class="w1"/>
      <path d="M829 435h62v4h-62z" fill="#54585e"/>
      <path d="M830 438h61v34h-61z" fill="#eff0ff"/>
      <path d="M838.500 438v34M848.500 438v34M859.500 435v37M869.500 438v34M880.500 438v34" stroke="#56595f" stroke-width="1.500"/>
      <path d="M843 441.500h4M853 441.500h4M863 441.500h4M873 441.500h4" stroke="#555"/>

      <path d="M951 402h57v71h-57z" fill="url(#garL)"/>
      <path d="M1019 402h54v71h-54z" fill="url(#garR)"/>
      <path d="M951 417.500h122v5H951z" class="bg"/>
      <path d="M952 417.500h56M952 422.500h56M1019 417.500h54M1019 422.500h54" stroke="#eef0ff"/>
      <path d="M951 432.500h122M951 443.500h122M951 453.500h122M951 464.500h122" stroke="#282e3c"/>
      <path d="M970.500 422v50M1047 402v14" stroke="#6b7189"/>
      <path d="M950 384h134v17.500H950zM1008 401h11v72h-11zM1073 401h11v72h-11z" class="bg"/>
      <path d="M962 385h109M962 401h109M963.500 385v16M1070 385v16M1009 401v58M1018 401v58M1074 401v58M1083.500 401v58M951 402v71" class="b2"/>
      <path d="M949.500 385.500h12v15h-12zM1071.500 385.500h11v15h-11z" class="w1"/>
      <path d="M1083 390v12M1008 459.500h11M1073 459.500h11M1008.500 460v13M1018.500 460v13M1073.500 460v13M1084.500 460v13" class="w1"/>

      <path d="M1085 442h124v32h-124z" fill="url(#mesh)"/>
      <path d="M1085 442.500h124M1126.500 442v32M1167.500 442v32M1208.500 442v32" stroke="#909396" fill="none"/>
      <path d="M1134.800 457A323.500 323.500 0 0 0 775 311.800L773 307.700A328 328 0 0 1 1142 460z" fill="#17262b"/>
      <g fill="none" stroke="#6d9795"><path d="M769 301.600A335 335 0 0 1 1127 424.800"/><path d="M770 304.500A332 332 0 0 1 1144 459"/><path d="M773 307.700A328 328 0 0 1 1142 460"/><path d="M775 311.800A323.500 323.500 0 0 1 1136 460"/><path d="M769 301l2 4M773 305l3 7"/></g>
      <path d="M1133 462l21-9v20h-21z" class="bg"/><path d="M1133.500 473v-11l20-8v19" fill="none" stroke="#d5d8da"/><path d="M1141 454l12 18" stroke="#7e9693"/>
      <path d="M75 474h1134" class="w2"/>
      <path d="M713.500 268v227M798.500 268v227M1013.500 269v226M1075.500 269v226M1143.500 269v226" stroke="#d5d7da"/>
      <path d="M796 310.500h6M796 319.500h6M1011 342.500h6M1011 351.500h6" stroke="#f0c94a" stroke-width="1.500"/>
      <path d="M795 315h7M1010 347h7M798.500 311v8M1013.500 343v8" stroke="#ce3ec4"/>

      <g fill="none" stroke="#b9bcc0"><circle cx="103" cy="257" r="10.500"/><circle cx="191" cy="257" r="10.500"/><circle cx="279" cy="257" r="10.500"/><circle cx="367" cy="257" r="10.500"/><circle cx="714" cy="257" r="10.500"/><circle cx="798.500" cy="257" r="10.500"/><circle cx="920.500" cy="257" r="10.500"/><circle cx="1013.500" cy="258.500" r="10.500"/><circle cx="1075.500" cy="258.500" r="10.500"/><circle cx="1143.500" cy="258.500" r="10.500"/></g>
      <g class="bub small"><text x="103" y="261">G-A</text><text x="191" y="261">G-B</text><text x="279" y="261">G-C</text><text x="367" y="261">G-D</text></g>
      <g class="bub"><text x="714" y="262">B</text><text x="798" y="262">C</text><text x="921" y="262">D</text><text x="1014" y="263">E</text><text x="1076" y="263">F</text><text x="1144" y="263">G</text></g>
      <text x="79" y="561" class="caption">Front Elevation</text>
      <path d="M12.500 636.500h6v6h-6zM15.500 639V606M15 639.500h33" class="w1"/>
      <g class="ucs"><text x="16" y="603">Y</text><text x="52" y="639">X</text></g>
    </svg>
    <div class="float">
      <div class="mdi">
        <button aria-label="図面を最小化"><svg viewBox="0 0 10 10"><path d="M1 7h7v2H1z" fill="#fff"/></svg></button>
        <button aria-label="図面を元に戻す"><svg viewBox="0 0 10 10"><path d="M3 2h6v5M1.500 4h5v5h-5z" fill="none" stroke="#fff" stroke-width="1.500"/></svg></button>
        <button aria-label="図面を閉じる"><svg viewBox="0 0 10 10"><path d="M2 2l6 6M8 2L2 8" stroke="#fff" stroke-width="2"/></svg></button>
      </div>
      <div class="navbar"><svg viewBox="0 0 21 89"><g fill="none" stroke="#454b52"><path d="M14 4h4M4 14h12v13H4zM7 17h6v6H7zM16 24v6M13 28h5"/><path d="M6 38l4 4M9 37l3 5M12 36l2 6v5l-5 1-5-6M4 52l12 12M16 53L4 65M14 58l4-3M15 63h4v5h-4z"/></g></svg></div>
    </div>
  </main>

  <section class="command">
    <div class="grip"><svg viewBox="0 0 16 39"><path d="M2 2.500h12M2 5h12" stroke="#fff"/><path d="M5 12l5 5M10 12l-5 5" stroke="#fff" stroke-width="1.500"/><path d="M4 35l6-6" stroke="#fff" stroke-width="2"/><path d="M9 27q1-3 4-2l-2 2 1 2 2-1q0 4-4 3z" fill="#fff"/></svg></div>
    <div class="cmdbox">
      <div class="log"><p>コマンド:</p><p>コマンド:</p></div>
      <label class="entry"><svg viewBox="0 0 18 10"><path d="M.5 1h10v7.500H.5zM2 3l2 2-2 2M5 7h3" fill="none" stroke="#8e9298"/><path d="M13 4h4l-2 2.500z" fill="#888"/></svg><input type="text" aria-label="コマンド入力" placeholder="ここにコマンドを入力"></label>
    </div>
  </section>

  <footer class="status">
    <div class="sheets"><button class="on kana"><span>モデル</span></button><button>Hatch</button><span class="slash"></span><button class="plus" aria-label="レイアウトを追加"></button><span class="slash"></span></div>
    <div class="toggles">
      <button class="t24 kana">モデル</button>
      <button class="t16" aria-label="グリッド"><svg viewBox="0 0 14 14"><path d="M4.500 2v11M8 2v11M11.500 2v11M2 4.500h12M2 8h12M2 11.500h12" stroke="#d7dade" fill="none"/></svg></button>
      <button class="t16" aria-label="スナップ"><svg viewBox="0 0 14 14"><path d="M2 3.500h12M2 7.500h12M2 11.500h12" stroke="#c9cdd2" stroke-width="1.500" stroke-dasharray="1.500 2.500"/></svg></button>
      <button class="t12" aria-label="スナップ設定"><svg class="dn"><use href="#dn"/></svg></button>
      <button class="t16 lit" aria-label="推測拘束"><svg viewBox="0 0 14 14"><path d="M1 5h5M3.500 3v4M6 10h8M8 8h4" stroke="#fff" stroke-width="1.500"/></svg></button>
      <button class="t16 lit" aria-label="直交"><svg viewBox="0 0 14 14"><path d="M3.500 1v11h10" fill="none" stroke="#fff"/><path d="M4 8.500h3V12" fill="none" stroke="#a2d4ef"/></svg></button>
      <button class="t16" aria-label="極"><svg viewBox="0 0 14 14"><circle cx="6" cy="8" r="4.500" fill="none" stroke="#d7dade"/><path d="M6 8h8M6 8l5-6" stroke="#d7dade"/></svg></button>
      <button class="t12" aria-label="極設定"><svg class="dn"><use href="#dn"/></svg></button>
      <button class="t16" aria-label="アイソメ"><svg viewBox="0 0 14 14"><path d="M2 3l9 9" stroke="#a6acb6"/><path d="M9 2v6" stroke="#588f68"/></svg></button>
      <button class="t12" aria-label="アイソメ設定"><svg class="dn"><use href="#dn"/></svg></button>
      <button class="t16 lit" aria-label="トラッキング"><svg viewBox="0 0 14 14"><path d="M1 12h12M2 12L11 3" stroke="#fff"/><path d="M9 7h4" stroke="#a2d4ef"/></svg></button>
      <button class="t16 lit" aria-label="スナップ点"><svg viewBox="0 0 14 14"><path d="M4 4h8v8H4z" fill="none" stroke="#fff"/><path d="M1.500 1.500h4v4h-4z" fill="#628ec4" stroke="#d1e6f6"/></svg></button>
      <button class="t12" aria-label="スナップ点設定"><svg class="dn"><use href="#dn"/></svg></button>
      <button class="t16 lit" aria-label="注釈可視性"><svg viewBox="0 0 14 14"><path d="M6 2l1 5 5 6-6-4-5 4 4-7z" fill="#fff"/><circle cx="10.500" cy="4" r="2.200" fill="none" stroke="#fff"/></svg></button>
      <button class="t16" aria-label="自動尺度"><svg viewBox="0 0 14 14"><path d="M6 2l1 5 5 6-6-4-5 4 4-6z" fill="#fff"/><path d="M10.500 1v6M8 4h5" stroke="#fff"/></svg></button>
      <button class="t16" aria-label="注釈尺度"><svg viewBox="0 0 14 14"><path d="M7 1l1.500 6 4.500 6-6-4-6 4 4.500-6z" fill="#fff"/></svg></button>
      <button class="t24">1:1<svg class="dn"><use href="#dn"/></svg></button>
      <button class="t16" aria-label="設定"><svg viewBox="0 0 14 14"><circle cx="7" cy="7" r="3.500" fill="none" stroke="#eee" stroke-width="2"/><path d="M7 1v2M7 11v2M1 7h2M11 7h2M3 3l1 1M10 10l1 1M11 3l-1 1M3 11l1-1" stroke="#eee" stroke-width="2"/></svg></button>
      <button class="t12" aria-label="設定メニュー"><svg class="dn"><use href="#dn"/></svg></button>
      <button class="t18" aria-label="注釈モニター"><svg viewBox="0 0 14 14"><path d="M7 1v12M1 7h12" stroke="#eee" stroke-width="1.300"/></svg></button>
      <button class="t18" aria-label="単位"><svg viewBox="0 0 14 14"><path d="M1.500 2.500h5v4h-5zM7 8.500L4.500 13h5z" fill="none" stroke="#ddd"/><circle cx="11" cy="6" r="2.500" fill="none" stroke="#ddd"/></svg></button>
      <button class="t16" aria-label="選択表示"><svg viewBox="0 0 14 14"><circle cx="7" cy="7" r="5.500" fill="#707782" stroke="#c9cdd2"/><path d="M3 4l8 7" stroke="#ccc"/></svg></button>
      <button class="t18" aria-label="ハードウェア"><svg viewBox="0 0 14 14"><path d="M1 3h5v4h7v5H8V9H1z" fill="#4ba4d4"/><path d="M7 1h3v5H7z" fill="#f1c84c"/><path d="M7 11l2 2 5-6" fill="none" stroke="#59c36d" stroke-width="1.500"/></svg></button>
      <button class="t18" aria-label="全画面表示"><svg viewBox="0 0 14 14"><path d="M1 3h12v9H1z" fill="none" stroke="#c7cbd1"/><path d="M3 8v2h2zM11 5H9l2 2z" fill="#fff" stroke="#fff"/></svg></button>
      <button class="t16" aria-label="カスタマイズ"><svg viewBox="0 0 14 14"><path d="M2 3h11M2 7.500h11M2 12h11" stroke="#fff" stroke-width="1.300"/></svg></button>
    </div>
  </footer>
</div>
</body>
</html>
```

FILE: styles.css
```css
* { box-sizing: border-box; }
body {
  margin: 0;
  background: #222933;
  color: #e3e5e9;
  font-family: "Open Sans", "Noto Sans CJK JP", sans-serif;
  font-size: 8px;
  line-height: 10px;
  font-feature-settings: "palt";
}
.app {
  display: flex;
  flex-direction: column;
  min-height: 100vh;
  border: 2px solid #26718c;
}
.defs { display: none; }
button, input, select {
  margin: 0;
  padding: 0;
  border: 0;
  background: none;
  color: inherit;
  font: inherit;
  font-feature-settings: inherit;
  white-space: nowrap;
}
button { display: flex; align-items: center; justify-content: center; flex: none; }
button svg { flex: none; }
.kana { font-size: 7px; }
.dn { width: 5px; height: 3px; color: #dfe2e6; flex: none; }

/* title bar */
.titlebar { display: flex; align-items: center; height: 18px; padding-left: 2px; }
.logo { display: flex; height: 11px; color: #fff; line-height: 11px; text-align: center; }
.logo b { width: 13px; background: #e01450; font-size: 9px; }
.logo span { width: 12px; background: #6c1023; font-size: 6px; font-weight: 700; }
.quick { display: flex; margin-left: 5px; }
.quick button { width: 16px; }
.quick button svg:not(.dn) { width: 12px; height: 12px; }
.quick .narrow { width: 8px; }
.quick .narrow .dn, .account .narrow .dn { width: 4px; height: 2px; }
.quick .narrow .cust { width: 8px; height: 8px; }
.quick .dim .dn { color: #6b7280; }
.quick .share { width: auto; margin-left: 4px; gap: 3px; color: #bfe4f2; }
.titlebar h1 { display: flex; gap: 8px; margin: 0 auto 0 237px; font: 400 8px/10px Roboto, sans-serif; white-space: nowrap; color: #f4f5f6; }
.account { display: flex; align-items: center; }
.account .play { width: 3px; height: 6px; margin-right: 4px; }
.account input { width: 119px; height: 13px; padding-left: 3px; background: #454c5a; font-size: 7px; font-style: italic; }
.account input::placeholder { color: #b8bcc4; opacity: 1; }
.account button svg:not(.dn) { width: 11px; height: 11px; }
.account button { width: 16px; }
.account .sign { width: 69px; justify-content: flex-start; gap: 3px; padding-left: 2px; }
.account .narrow { width: 14px; }
.account .help b { width: 11px; height: 11px; border-radius: 50%; background: #eceded; color: #222933; line-height: 11px; }
.winctl { display: flex; margin-left: 32px; }
.winctl button { width: 17px; }
.winctl svg { width: 9px; height: 9px; }

/* ribbon tabs */
.menu { display: flex; height: 15px; padding-left: 3px; gap: 1px; }
.menu button { padding: 0 6px; color: #c9ccd2; }
.menu .on { width: 29px; background: #3b4354; color: #fff; }
.menu .fold { margin-left: 6px; }
.menu .fold svg { width: 18px; height: 6px; }

/* ribbon */
.ribbon { display: flex; height: 66px; margin: 0 1px 0 2px; background: #3b4354; }
.panel { display: flex; flex-direction: column; flex: none; border-right: 1px solid #2c3341; padding-top: 3px; }
.p-draw { width: 143px; }
.p-mod { width: 182px; }
.p-ann { width: 144px; }
.p-layer { width: 239px; }
.p-block { width: 89px; }
.p-prop { width: 171px; }
.p-group { width: 48px; }
.p-util { width: 56px; }
.p-clip { width: 69px; border: 0; }
.body { display: flex; height: 48px; }
.grid4 { display: grid; grid-template-columns: 49px 53px 59px 16px; grid-auto-rows: 16px; padding-left: 3px; }
.rows { display: flex; flex-direction: column; padding-left: 1px; }
.sm { height: 16px; gap: 3px; justify-content: flex-start; }
.sm svg:not(.dn) { width: 14px; height: 12px; }
.sm .dn { margin-left: 1px; }
.sm.active { background: #2d5b73; outline: 1px solid #58a9c4; outline-offset: -1px; }
.big { flex-direction: column; justify-content: flex-start; line-height: 10px; }
.big svg:not(.dn) { width: 24px; height: 24px; margin-bottom: 1px; }
.big .dn { margin-top: 2px; width: 4px; }
.bigA { height: 25px; font: 500 24px/25px Roboto, sans-serif; color: #eceef0; }
.w26 { width: 26px; }
.w28 { width: 28px; }
.w32 { width: 32px; }
.w34 { width: 34px; }
.w36 { width: 36px; }
.w42 { width: 42px; }
.w50 { width: 50px; }
.title { position: relative; gap: 4px; height: 15px; width: 100%; color: #d3d6dc; line-height: 15px; text-align: center; white-space: nowrap; }
.title .launch { position: absolute; right: 2px; width: 5px; height: 5px; }
.p-block .body, .p-prop .body { padding-left: 1px; }

/* layer combo and its open list */
.layers { position: relative; width: 138px; margin-left: 2px; }
.combo { width: 100%; height: 15px; justify-content: flex-start; padding: 0 2px 0 3px; background: #454f63; }
.combo .dn { margin-left: auto; }
.bu { width: 10px; height: 12px; color: #6fd6e8; flex: none; }
.bu.on { color: #f6d98b; }
.ic { width: 12px; height: 12px; flex: none; }
.layers i { width: 10px; height: 10px; margin: 0 3px 0 2px; border: 1px solid #d3d6dc; flex: none; }
.list {
  position: absolute;
  z-index: 2;
  top: 16px;
  left: 0;
  width: 152px;
  margin: 0;
  padding: 0 7px 1px 2px;
  list-style: none;
  background: linear-gradient(#2f384a, #2f384a) 146px 0 / 4px 335px no-repeat, #4b566d;
  box-shadow: 0 0 0 1px #242b38, 2px 2px 1px #171c24;
}
.list li { display: flex; align-items: center; height: 16px; padding-left: 3px; white-space: nowrap; color: #f2f3f6; }
.list .bu { margin-right: 2px; }
.list li[aria-selected="true"] { background: #3a404e; }
.cursor { position: absolute; z-index: 3; left: 136px; top: 5px; width: 10px; height: 15px; }
.move { margin: 32px auto 0 16px; height: 16px; }
.green { background: #0f0; }
.white { background: #fff; }
.slate { background: #8492a8; }
.azure { background: #3c6fce; }
.gray { background: #878787; }
.blue { background: #00f; }
.magenta { background: #f0f; }
.rose { background: #ff007f; }
.olive { background: #a5a500; }
.teal { background: #35795f; }
.yellow { background: #ff0; }
.coal { background: #5a5a5a; }
.silver { background: #b3b3b3; }
.red { background: #f00; }
.cerulean { background: #0f7ba8; }

/* property fields */
.props { display: flex; flex-direction: column; gap: 2px; flex: 1; padding: 1px 2px 0 0; }
.prop { display: flex; align-items: center; gap: 3px; height: 14px; }
.prop > svg { width: 12px; height: 12px; flex: none; }
.field { display: flex; align-items: center; flex: 1; height: 14px; padding: 0 2px 0 3px; background: #4b566d; }
.field select { appearance: none; flex: 1; min-width: 0; height: 14px; color: #eceef2; }
.field i { flex: none; }
.rgb { width: 11px; height: 11px; margin-right: 3px; background: #939598; border: 1px solid #c4c7ca; }
.rule { width: 43px; height: 1px; margin-right: 1px; background: #e7e9ec; }

/* file tabs */
.files { display: flex; align-items: stretch; height: 18px; padding-left: 6px; }
.slash { width: 6px; margin: 5px 0; background: linear-gradient(120deg, transparent 43%, #59616e 43% 57%, transparent 57%); flex: none; }
.files > button { padding: 0 5px; }
.tab { display: flex; align-items: center; gap: 5px; width: 108px; padding-left: 9px; background: #3b4354; clip-path: polygon(6px 0, 100% 0, calc(100% - 6px) 100%, 0 100%); color: #fff; white-space: nowrap; font-family: Roboto, "DejaVu Sans", sans-serif; }
.files .second { width: 52px; }
.plus { width: 20px; background: linear-gradient(#eee, #eee) center / 8px 1px no-repeat, linear-gradient(#eee, #eee) center / 1px 8px no-repeat; }

/* drawing area */
.canvas { position: relative; flex: 1; border-top: 2px solid #3d444f; background: #212830; }
.dwg { display: block; width: 100%; }
.w1 { fill: none; stroke: #f2f3f4; stroke-width: 1; }
.w2 { fill: none; stroke: #fff; stroke-width: 2; }
.b2 { fill: none; stroke: #0b0bc4; stroke-width: 2; }
.bg, .solid { fill: #212830; }
.gridthick { stroke: #7b8187; stroke-width: 2; }
.bub { font: 12px "Liberation Sans", sans-serif; fill: #f1f2f3; stroke: #f1f2f3; stroke-width: .3; text-anchor: middle; }
.small { font-size: 10px; }
.caption { font: 33px "Liberation Sans", sans-serif; fill: #04f404; stroke: #04f404; stroke-width: .4; }
.ucs { font: 300 13px "Open Sans", sans-serif; fill: #d8dbde; }
.float { position: absolute; top: 5px; right: 3px; display: flex; flex-direction: column; align-items: flex-end; gap: 3px; }
.mdi { display: flex; gap: 3px; padding-right: 4px; }
.mdi button { width: 10px; height: 10px; }
.mdi svg { width: 9px; height: 9px; }
.navbar { width: 22px; height: 89px; border: 1px solid #6a7076; border-radius: 3px; background: #5b6167; }
.navbar svg { display: block; width: 20px; }

/* command line */
.command { display: flex; padding: 1px 1px 0 1px; border: solid #3a424f; border-width: 2px 0; background: #1b202a; }
.grip { width: 16px; background: #252a38; }
.grip svg { display: block; width: 16px; height: 39px; }
.cmdbox { flex: 1; color: #26282c; }
.log { height: 24px; padding: 3px 2px 0; background: #c8c8c8; }
.log p { margin: 0; line-height: 10px; }
.entry { display: flex; align-items: center; height: 15px; padding-left: 3px; gap: 4px; background: #fff; border-top: 1px solid #8d8f92; }
.entry svg { width: 18px; height: 10px; }
.entry input { flex: 1; font-style: italic; outline: 0; }
.entry input::placeholder { color: #70747a; opacity: 1; }

/* status bar */
.status { display: flex; justify-content: space-between; height: 21px; padding: 0 1px 2px 6px; }
.sheets { display: flex; }
.sheets button { padding: 0 5px; }
.sheets .on { width: 42px; background: #3f485a; color: #fff; clip-path: polygon(6px 0, 100% 0, calc(100% - 6px) 100%, 0 100%); }
.sheets .plus { width: 20px; }
.toggles { display: flex; align-items: center; }
.toggles button { height: 16px; background-color: #303746; }
.toggles svg:not(.dn) { width: 13px; height: 13px; }
.toggles .lit { background-color: #5583bf; box-shadow: inset 1px 0 #303746; }
.t12 { width: 12px; }
.t16 { width: 16px; }
.t18 { width: 18px; }
.t24 { width: 24px; gap: 3px; }
```
